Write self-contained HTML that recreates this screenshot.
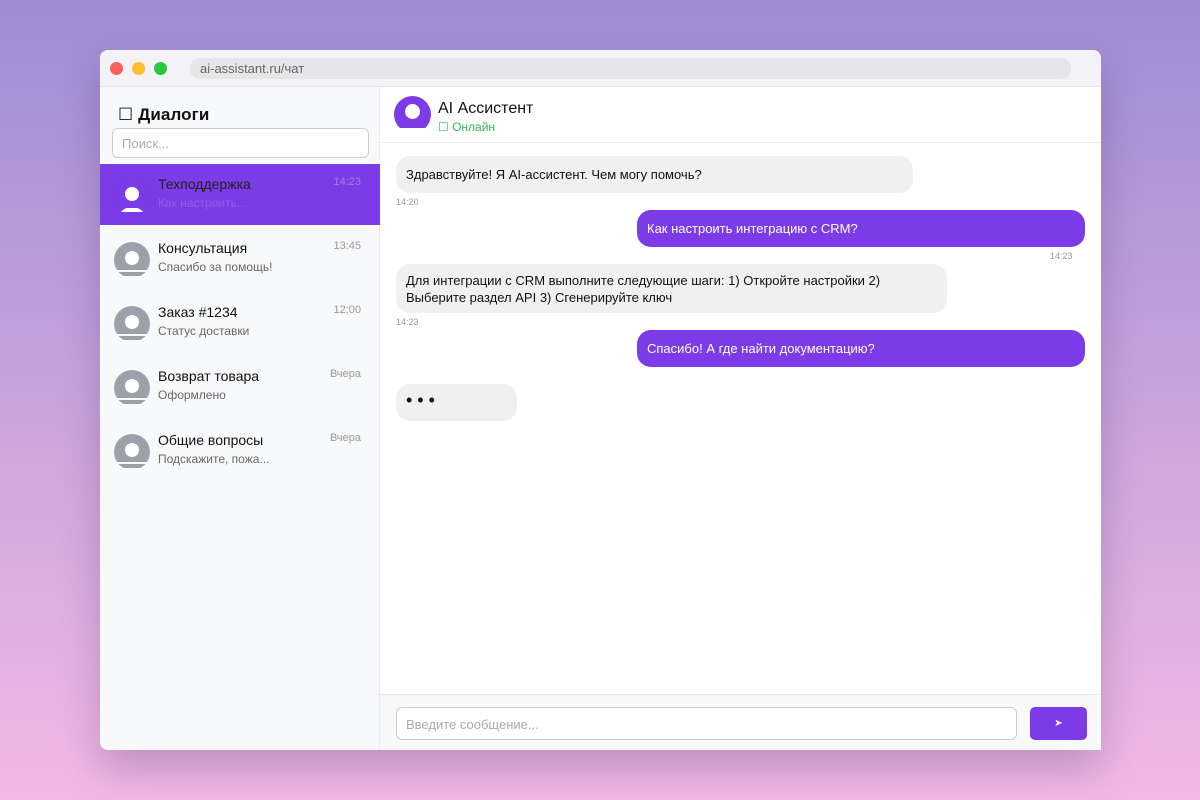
<!DOCTYPE html>
<html><head><meta charset="utf-8"><style>
*{box-sizing:border-box;margin:0;padding:0}
body{width:1200px;height:800px;overflow:hidden;background:linear-gradient(180deg,#9e8cd4 0%,#c8a4dc 50%,#f3b9e4 100%);font-family:"Liberation Sans","DejaVu Sans",sans-serif;position:relative}
.win{position:absolute;left:100px;top:50px;width:1001px;height:700px;background:#fff;border-radius:8px;overflow:hidden;box-shadow:0 20px 40px rgba(60,30,90,.25)}
.tb{height:37px;background:#f3f3f5;position:relative;border-bottom:1px solid #e6e6ea}
.dot{position:absolute;top:12px;width:13px;height:13px;border-radius:50%}
.url{position:absolute;left:90px;top:8px;width:881px;height:21px;background:#e6e6e8;border-radius:10px;font-size:13px;color:#666;padding:3px 10px}
.side{position:absolute;left:0;top:37px;width:280px;height:663px;background:#f8f9fb;border-right:1px solid #ececf0}
.side h2{position:absolute;left:18px;top:18px;font-size:17px;font-weight:bold;color:#111;letter-spacing:.1px}
.search{position:absolute;left:12px;top:41px;width:257px;height:30px;border:1px solid #ccc;border-radius:6px;background:#fff;font-size:13px;color:#aaa;padding:7px 9px}
.item{position:absolute;left:0;width:280px;height:64px}
.item.act{background:#7b3be6;height:61px}
.av{position:absolute;left:14px;top:14px;width:36px;height:34px;overflow:hidden}
.av .c{position:absolute;left:0;top:0;width:36px;height:36px;border-radius:50%;background:#9ca0a9}
.av .c:after{content:"";position:absolute;left:11px;top:9px;width:14px;height:14px;border-radius:50%;background:#fff}
.av .b{position:absolute;left:3px;top:29px;width:30px;height:30px;border-radius:50%;background:#fff}
.av .cut{position:absolute;left:0;top:28px;width:36px;height:2px;background:#f8f9fb}
.act .av .c{background:#7b3be6}
.act .av .cut{background:#7b3be6}
.nm{position:absolute;left:58px;top:12px;font-size:14px;color:#111}
.pv{position:absolute;left:58px;top:32px;font-size:12px;color:#666}
.tm{position:absolute;right:19px;top:12px;font-size:11px;color:#999}
.act .nm{color:#222}.act .pv{color:#8f5fe0}.act .tm{color:#a27fe6}
.hdr{position:absolute;left:280px;top:37px;width:721px;height:56px;border-bottom:1px solid #ececf0}
.hav{position:absolute;left:14px;top:9px;width:37px;height:32px;overflow:hidden}
.hav .c{width:37px;height:37px;border-radius:50%;background:#7b3be6;position:relative}
.hav .c:after{content:"";position:absolute;left:11px;top:8px;width:15px;height:15px;border-radius:50%;background:#fff}
.hn{position:absolute;left:58px;top:13px;font-size:16px;color:#111}
.hs{position:absolute;left:58px;top:33px;font-size:12px;color:#2fb65f}
.msg{position:absolute;font-size:13px;line-height:17px;padding:0 10px;border-radius:14px;display:flex;align-items:center}
.in{background:#f0f0f0;color:#111;left:396px}
.out{background:#7b3be6;color:#fff}
.t{position:absolute;font-size:9px;color:#999}
.bot{position:absolute;left:280px;top:644px;width:721px;height:56px;background:#f8f9fb;border-top:1px solid #e8e8ec}
.inp{position:absolute;left:16px;top:12px;width:621px;height:33px;border:1px solid #ccc;border-radius:6px;background:#fff;font-size:13px;color:#aaa;padding:9px 9px}
.send{position:absolute;left:650px;top:12px;width:57px;height:33px;background:#7b3be6;border-radius:5px;color:#fff;font-size:10px;text-align:center;line-height:33px}
</style></head><body>
<div class="win">
 <div class="tb">
  <div class="dot" style="left:10px;background:#fe5f57"></div>
  <div class="dot" style="left:32px;background:#febc2e"></div>
  <div class="dot" style="left:54px;background:#28c840"></div>
  <div class="url">ai-assistant.ru/чат</div>
 </div>
 <div class="side">
  <h2>☐ Диалоги</h2>
  <div class="search">Поиск...</div>
  <div class="item act" style="top:77px"><div class="av"><div class="c"></div><div class="b"></div><div class="cut"></div></div><div class="nm">Техподдержка</div><div class="pv">Как настроить...</div><div class="tm">14:23</div></div>
  <div class="item" style="top:141px"><div class="av"><div class="b"></div><div class="c"></div><div class="cut"></div></div><div class="nm">Консультация</div><div class="pv">Спасибо за помощь!</div><div class="tm">13:45</div></div>
  <div class="item" style="top:205px"><div class="av"><div class="b"></div><div class="c"></div><div class="cut"></div></div><div class="nm">Заказ #1234</div><div class="pv">Статус доставки</div><div class="tm">12:00</div></div>
  <div class="item" style="top:269px"><div class="av"><div class="b"></div><div class="c"></div><div class="cut"></div></div><div class="nm">Возврат товара</div><div class="pv">Оформлено</div><div class="tm">Вчера</div></div>
  <div class="item" style="top:333px"><div class="av"><div class="b"></div><div class="c"></div><div class="cut"></div></div><div class="nm">Общие вопросы</div><div class="pv">Подскажите, пожа...</div><div class="tm">Вчера</div></div>
 </div>
 <div class="hdr">
  <div class="hav"><div class="c"></div></div>
  <div class="hn">AI Ассистент</div>
  <div class="hs">☐ Онлайн</div>
 </div>
</div>
<div class="msg in" style="top:156px;width:517px;height:37px">Здравствуйте! Я AI-ассистент. Чем могу помочь?</div>
<div class="t" style="left:396px;top:197px">14:20</div>
<div class="msg out" style="left:637px;top:210px;width:448px;height:37px">Как настроить интеграцию с CRM?</div>
<div class="t" style="left:1050px;top:251px">14:23</div>
<div class="msg in" style="top:264px;width:551px;height:49px">Для интеграции с CRM выполните следующие шаги: 1) Откройте настройки 2) Выберите раздел API 3) Сгенерируйте ключ</div>
<div class="t" style="left:396px;top:317px">14:23</div>
<div class="msg out" style="left:637px;top:330px;width:448px;height:37px">Спасибо! А где найти документацию?</div>
<div class="msg in" style="top:384px;width:121px;height:37px;font-size:18px;letter-spacing:5px;padding-bottom:4px">•••</div>
<div class="win" style="background:transparent;box-shadow:none;pointer-events:none;overflow:visible">
 <div class="bot"><div class="inp">Введите сообщение...</div><div class="send">➤</div></div>
</div>
</body></html>
